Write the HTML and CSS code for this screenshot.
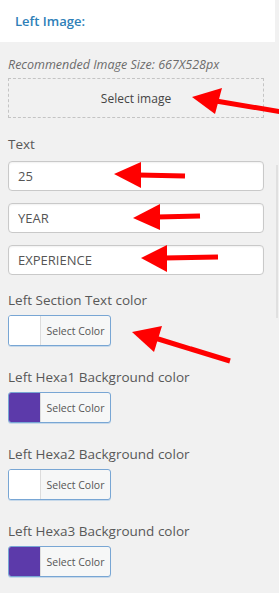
FILE: index.html
```html
<!DOCTYPE html>
<html lang="en">
<head>
    <meta charset="UTF-8">
    <meta name="viewport" content="width=device-width, initial-scale=1.0">
    <title>Left Image</title>
    <link rel="stylesheet" href="styles.css">
</head>
<body>
    <div id="panel">
        <div class="panel-header">Left Image:</div>
        <div class="panel-body">
            <p class="hint">Recommended Image Size: 667X528px</p>
            <div class="image-drop">Select image</div>

            <label class="field-label">Text</label>
            <div class="text-fields">
                <input type="text" class="text-input" value="25">
                <input type="text" class="text-input" value="YEAR">
                <input type="text" class="text-input" value="EXPERIENCE">
            </div>

            <div class="color-field">
                <label class="field-label">Left Section Text color</label>
                <button class="color-btn"><span class="swatch swatch-white"></span><span class="color-text">Select Color</span></button>
            </div>
            <div class="color-field">
                <label class="field-label">Left Hexa1 Background color</label>
                <button class="color-btn"><span class="swatch swatch-purple"></span><span class="color-text">Select Color</span></button>
            </div>
            <div class="color-field">
                <label class="field-label">Left Hexa2 Background color</label>
                <button class="color-btn"><span class="swatch swatch-white"></span><span class="color-text">Select Color</span></button>
            </div>
            <div class="color-field">
                <label class="field-label">Left Hexa3 Background color</label>
                <button class="color-btn"><span class="swatch swatch-purple"></span><span class="color-text">Select Color</span></button>
            </div>
        </div>
    </div>
    <div class="scroll-thumb"></div>

    <!-- annotation arrows drawn over the screenshot -->
    <svg class="arrows" width="279" height="593" viewBox="0 0 279 593">
        <g fill="#ff0000" stroke="#ff0000" stroke-width="5">
            <line x1="216" y1="101" x2="282" y2="112"/>
            <polygon points="192,97 222,88 215,114" stroke="none"/>
            <line x1="138" y1="175" x2="185" y2="176"/>
            <polygon points="114,174 141,162 141,188" stroke="none"/>
            <line x1="157" y1="217" x2="200" y2="216"/>
            <polygon points="133,218 160,204 160,230" stroke="none"/>
            <line x1="164" y1="258" x2="218" y2="257"/>
            <polygon points="141,258 167,245 167,272" stroke="none"/>
            <line x1="155" y1="338" x2="230" y2="361"/>
            <polygon points="132,332 162,326 154,352" stroke="none"/>
        </g>
    </svg>
</body>
</html>
```

FILE: styles.css
```css
body {
    font-family: "Open Sans", "Liberation Sans", sans-serif;
    margin: 0;
    padding: 0;
    background-color: #f1f1f1;
    width: 279px;
    height: 593px;
    overflow: hidden;
    position: relative;
}
#panel {
    width: 275px;
}
.panel-header {
    height: 42px;
    background: #fff;
    color: #2e80b8;
    font-size: 13px;
    font-weight: 600;
    line-height: 42px;
    padding-left: 15px;
    box-sizing: border-box;
}
.panel-body {
    padding: 15px 11px 0 8px;
}
.hint {
    margin: 0 0 5px;
    font-size: 12.5px;
    font-style: italic;
    line-height: 16px;
    color: #6b6b6b;
    white-space: nowrap;
}
.image-drop {
    height: 40px;
    box-sizing: border-box;
    border: 1px dashed #c4c4c4;
    display: flex;
    align-items: center;
    justify-content: center;
    font-size: 12px;
    color: #444;
    margin-bottom: 17px;
}
.field-label {
    display: block;
    font-size: 13.5px;
    line-height: 18px;
    color: #585858;
    margin-bottom: 8px;
    white-space: nowrap;
}
.text-fields {
    display: flex;
    flex-direction: column;
    gap: 12px;
    margin-bottom: 16px;
}
.text-input {
    height: 30px;
    box-sizing: border-box;
    border: 1px solid #c9c9c9;
    border-radius: 4px;
    background: #fff;
    padding: 0 9px;
    font-family: inherit;
    font-size: 13px;
    color: #555;
    box-shadow: inset 0 1px 2px rgba(0, 0, 0, 0.06);
}
.color-field {
    margin-bottom: 22px;
}
.color-field .field-label {
    margin-bottom: 6px;
}
.color-btn {
    display: flex;
    width: 103px;
    height: 31px;
    padding: 0;
    box-sizing: border-box;
    border: 1px solid #78a6d4;
    border-radius: 3px;
    background: #f6f7f7;
    overflow: hidden;
    box-shadow: 0 1px 0 #c7d9ea;
}
.swatch {
    width: 31px;
    height: 100%;
    border-right: 1px solid #dcdcdc;
}
.swatch-white {
    background: #fff;
}
.swatch-purple {
    background: #5c3aaa;
}
.color-text {
    flex: 1;
    display: flex;
    align-items: center;
    justify-content: center;
    font-family: "Open Sans", sans-serif;
    font-size: 10.5px;
    color: #555;
}
.scroll-thumb {
    position: absolute;
    right: 1px;
    top: 165px;
    width: 2px;
    height: 153px;
    background: #e0e0e0;
}
.arrows {
    position: absolute;
    left: 0;
    top: 0;
    pointer-events: none;
}
```
